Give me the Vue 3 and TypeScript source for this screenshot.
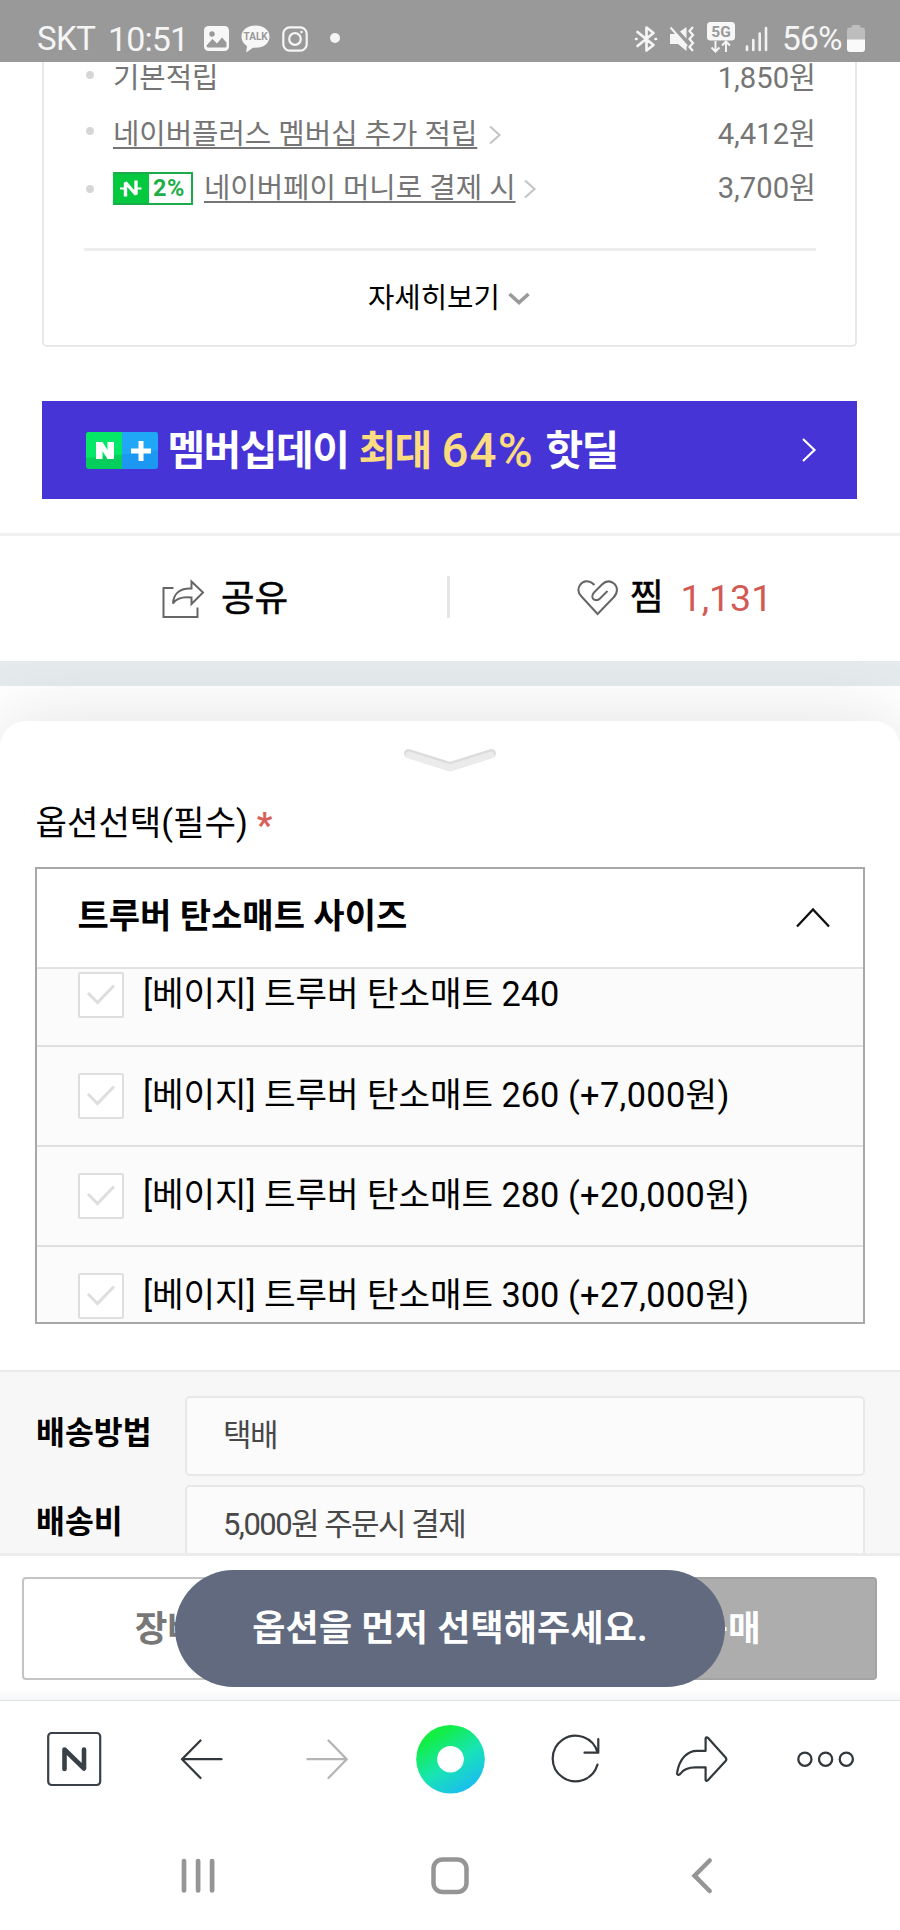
<script setup lang="ts">
interface Benefit {
  label: string
  amount: string
  link: boolean
  badge: boolean
}

interface Option {
  name: string
  extra: string
}

const benefits: Benefit[] = [
  { label: '기본적립', amount: '1,850원', link: false, badge: false },
  { label: '네이버플러스 멤버십 추가 적립', amount: '4,412원', link: true, badge: false },
  { label: '네이버페이 머니로 결제 시', amount: '3,700원', link: true, badge: true },
]

const options: Option[] = [
  { name: '[베이지] 트루버 탄소매트 240', extra: '' },
  { name: '[베이지] 트루버 탄소매트 260', extra: ' (+7,000원)' },
  { name: '[베이지] 트루버 탄소매트 280', extra: ' (+20,000원)' },
  { name: '[베이지] 트루버 탄소매트 300', extra: ' (+27,000원)' },
]

const delivery = [
  { label: '배송방법', value: '택배' },
  { label: '배송비', value: '5,000원 주문시 결제' },
]
</script>

<template>
  <div class="screen">
    <header class="status">
      <span class="carrier">SKT</span>
      <span class="clock">10:51</span>
      <svg class="s-photo" width="25" height="25" viewBox="0 0 25 25">
        <rect width="25" height="25" rx="4.500" fill="#f7f7f7" />
        <circle cx="8" cy="8" r="2.700" fill="#999" />
        <path d="M2.500 19.500 8.500 13l4.500 4.500 5-6 4.500 5v3.500q0 1.500-1.500 1.500H4q-1.500 0-1.500-2z" fill="#999" />
      </svg>
      <svg class="s-talk" width="29" height="28" viewBox="0 0 29 28">
        <path d="M14.500 0.500C6.500 0.500.5 5 .5 11.500c0 4.500 2.500 7.500 5.500 9.500l-.8 6.500 6.800-4.800c10 1 16.500-4 16.500-11.200C28.500 5 22.500.5 14.500.5z" fill="#f7f7f7" />
        <text x="14.600" y="15.400" text-anchor="middle" class="talk-text">TALK</text>
      </svg>
      <svg class="s-insta" width="26" height="26" viewBox="0 0 26 26" fill="none" stroke="#f5f5f5" stroke-width="2.200">
        <rect x="1.300" y="1.300" width="23.400" height="23.400" rx="6.500" />
        <circle cx="13" cy="13" r="5.800" />
        <circle cx="19.500" cy="6" r="1.300" fill="#f5f5f5" stroke="none" />
      </svg>
      <span class="s-dot"></span>
      <span class="spacer"></span>
      <svg class="s-bt" width="24" height="28" viewBox="0 0 24 28" fill="none" stroke="#f5f5f5" stroke-width="2.700" stroke-linejoin="round" stroke-linecap="round">
        <path d="M3.500 7 19.500 20 12.500 25.500V2.500L19.500 8 3.500 21M2 14h.5M21.500 14h.5" />
      </svg>
      <svg class="s-mute" width="26" height="26" viewBox="0 0 26 26">
        <path d="M1 8h5l2 .5 9.500 10V25L9 18H1zM11 5.500 17.500 1v11.500z" fill="#f5f5f5" />
        <path d="M1.500 1.500 18 20" stroke="#f5f5f5" stroke-width="2" />
        <path d="m24 1-3.500 4 3.500 4-3.500 4 3.500 4-3.500 4 3.500 4" fill="none" stroke="#f5f5f5" stroke-width="2.200" />
      </svg>
      <svg class="s-5g" width="28" height="32" viewBox="0 0 28 32">
        <rect width="28" height="18.500" rx="3.500" fill="#f7f7f7" />
        <text x="14" y="15" text-anchor="middle" class="g-text">5G</text>
        <path d="M8.500 19v10M4.500 25.500l4 4 4-4M19 30V20M15 23.500l4-4 4 4" fill="none" stroke="#f5f5f5" stroke-width="2" />
      </svg>
      <svg class="s-signal" width="24" height="26" viewBox="0 0 24 26" stroke="#f2f2f2" stroke-width="2.600" stroke-linecap="round">
        <path d="M2 20.500v3.500M8.300 14v10M14.700 7.500V24M21 2v22" />
      </svg>
      <span class="percent">56%</span>
      <svg class="s-batt" width="18" height="27" viewBox="0 0 18 27">
        <path d="M6 0h6q1.500 0 1.500 2.500h1.500q3 0 3 3V15H0V5.500q0-3 3-3h1.500Q4.500 0 6 0z" fill="#bdbdbd" />
        <path d="M0 14.500h18V24q0 3-3 3H3q-3 0-3-3z" fill="#fafafa" />
      </svg>
    </header>

    <section class="card">
      <ul class="benefits">
        <li v-for="b in benefits" :key="b.label" class="benefit">
          <span class="bullet"></span>
          <span v-if="b.badge" class="npay">
            <svg width="34" height="29" viewBox="0 0 34 29" fill="none" stroke="#fff">
              <path d="M10.500 22.500V8.500L21 20.500V6.500" stroke-width="3.400" stroke-linejoin="bevel" />
              <path d="M5 14.500h6M20.500 14.500h6" stroke-width="2.200" />
            </svg>
            <b>2%</b>
          </span>
          <span :class="{ link: b.link }">{{ b.label }}</span>
          <svg v-if="b.link" class="arrow" width="14" height="20" viewBox="0 0 14 20">
            <path d="M2 1.500 11.500 10 2 18.500" fill="none" stroke="#c6c6c6" stroke-width="2.200" />
          </svg>
          <span class="amount">{{ b.amount }}</span>
        </li>
      </ul>
      <div class="more">
        <span>자세히보기</span>
        <svg width="22" height="14" viewBox="0 0 22 14">
          <path d="M1.500 2 11 10.500 20.500 2" fill="none" stroke="#9a9a9a" stroke-width="3.600" />
        </svg>
      </div>
    </section>

    <section class="banner">
      <svg class="nplus" width="72" height="37" viewBox="0 0 72 37">
        <defs>
          <clipPath id="nplus-clip"><rect width="72" height="37" rx="3" /></clipPath>
        </defs>
        <g clip-path="url(#nplus-clip)">
          <rect width="36" height="37" fill="#06ce5c" />
          <path d="M0 0h36v22.500L0 26z" fill="#05e766" />
          <rect x="36" width="36" height="37" fill="#1c98f3" />
          <path d="M36 0h36v18L36 22.500z" fill="#20a8f6" />
        </g>
        <path d="M10 10h6.500l5 8V10h6.500v17h-6.500l-5-8v8H10z" fill="#fff" />
        <path d="M55 9v20M45 19h20" stroke="#fff" stroke-width="5" />
      </svg>
      <span class="banner-text"><span class="w1">멤버십데이</span><span class="w2">최대</span><span class="w3">64%</span><span class="w4">핫딜</span></span>
      <svg class="banner-arrow" width="16" height="24" viewBox="0 0 16 24">
        <path d="M2 1 13.500 12 2 23" fill="none" stroke="#fff" stroke-width="2.200" />
      </svg>
    </section>

    <section class="social">
      <div class="share">
        <svg width="44" height="40" viewBox="161 578 44 40" fill="none" stroke="#666" stroke-width="2">
          <path d="M173.500 587H163.500V616H197.500V606.500" />
          <path d="M191.500 580.500 203 591.500 191.500 603V596.500C182 595.500 176 597.500 173 602.500 173.500 591.500 181 587 191.500 587.500z" />
        </svg>
        <span>공유</span>
      </div>
      <i class="split"></i>
      <div class="zzim">
        <svg width="42" height="38" viewBox="577 580 42 38" fill="none" stroke="#666" stroke-width="2">
          <path d="M594.500 586C589 580.500 583 581.500 580 586 577.500 590 578.500 594.500 581.500 597.500L597.600 615 613.500 598.500C618 594 618 588 614 584.500 610 581.500 605.500 582 602 585.500L594 593.500C591.500 596.500 592 599.500 594 600.500 596 601.500 598.500 601 600 599.500L607.500 592" />
        </svg>
        <span class="zlabel">찜</span>
        <span class="zcount">1,131</span>
      </div>
    </section>
    <div class="band"></div>

    <section class="sheet">
      <svg class="handle" width="96" height="28" viewBox="402 746 96 28" fill="none" stroke-linecap="round" stroke-linejoin="round">
        <path d="M408.500 753.500 450 766.500 491.500 753.500" stroke="#dcdcdc" stroke-width="9" />
        <path d="M409 755 450 768 491 755" stroke="#ebebeb" stroke-width="7" />
      </svg>
      <h2 class="title">옵션선택(필수)<em>*</em></h2>
      <div class="select">
        <div class="select-head">
          <span>트루버 탄소매트 사이즈</span>
          <svg width="36" height="22" viewBox="0 0 36 22">
            <path d="M2 19.500 18 2.500 34 19.500" fill="none" stroke="#111" stroke-width="2.300" />
          </svg>
        </div>
        <div class="options">
          <div v-for="o in options" :key="o.name" class="option">
            <span class="check">
              <svg width="30" height="24" viewBox="0 0 30 24">
                <path d="M2 11 11.500 20.500 28 3.500" fill="none" stroke="#dedede" stroke-width="3" />
              </svg>
            </span>
            <span class="option-text">{{ o.name }}<span class="extra">{{ o.extra }}</span></span>
          </div>
        </div>
      </div>

      <div class="delivery">
        <div v-for="d in delivery" :key="d.label" class="d-row">
          <b>{{ d.label }}</b>
          <span class="field">{{ d.value }}</span>
        </div>
      </div>

      <div class="actions">
        <div class="cart">장바구니</div>
        <div class="buy">구매</div>
        <div class="toast">옵션을 먼저 선택해주세요.</div>
      </div>
    </section>

    <nav class="toolbar">
      <svg width="70" height="70" viewBox="39 1724 70 70" fill="none" stroke="#394047">
        <rect x="48.200" y="1733" width="52" height="52" rx="3.500" stroke-width="2.200" />
        <path d="M64.500 1769V1749.500L84 1768.500V1749.500" stroke-width="4.600" stroke-linecap="round" stroke-linejoin="round" />
      </svg>
      <svg width="70" height="70" viewBox="165 1724 70 70" fill="none" stroke="#33383d" stroke-width="2.300" stroke-linecap="round" stroke-linejoin="round">
        <path d="M221.500 1759.200H182M200.500 1740.500 182 1759.200 200.500 1778" />
      </svg>
      <svg width="70" height="70" viewBox="290 1724 70 70" fill="none" stroke="#b4b4b4" stroke-width="2.300" stroke-linecap="round" stroke-linejoin="round">
        <path d="M307.500 1759.200H346.500M328.500 1740.500 346.700 1759.200 328.500 1778" />
      </svg>
      <svg width="70" height="70" viewBox="415.200 1724 70 70">
        <defs>
          <linearGradient id="dot-grad" x1="0.200" y1="0.100" x2="0.750" y2="0.950">
            <stop offset="0.080" stop-color="#12ee44" />
            <stop offset="0.550" stop-color="#18e4b4" />
            <stop offset="1" stop-color="#1bbdf0" />
          </linearGradient>
        </defs>
        <circle cx="450.700" cy="1759.200" r="34.300" fill="url(#dot-grad)" />
        <circle cx="450.700" cy="1759.200" r="13.300" fill="#fff" />
      </svg>
      <svg width="70" height="70" viewBox="541 1724 70 70" fill="none" stroke="#33383d" stroke-width="2.200" stroke-linecap="round" stroke-linejoin="round">
        <path d="M597.500 1764.500A22.800 22.800 0 1 1 597.500 1752.500M598.300 1739V1752.700H584.500" />
      </svg>
      <svg width="70" height="70" viewBox="666.400 1724 70 70" fill="none" stroke="#33383d" stroke-width="2.200" stroke-linejoin="round">
        <path d="M706 1738.500Q706.500 1736.500 708.500 1738L726 1757.500Q727.500 1759.200 726 1761L708.500 1780Q706.500 1782 706 1780V1767.300H696C689 1767.300 684 1769 681 1773.500 679 1776 677 1774.500 677.500 1772.500 680 1758.500 688 1750.500 698 1750.800H706z" />
      </svg>
      <svg width="70" height="70" viewBox="792.300 1724 70 70" fill="none" stroke="#33383d" stroke-width="2.300">
        <circle cx="805.200" cy="1759.200" r="6.600" /><circle cx="825.900" cy="1759.200" r="6.600" /><circle cx="846.600" cy="1759.200" r="6.600" />
      </svg>
    </nav>

    <footer class="sysnav">
      <svg width="40" height="40" viewBox="178.300 1856 40 40" stroke="#959595" stroke-width="4.700" stroke-linecap="round">
        <path d="M184.300 1861V1890.500M198.400 1861V1890.500M212.400 1861V1890.500" />
      </svg>
      <svg width="40" height="40" viewBox="430.300 1856 40 40" fill="none" stroke="#959595" stroke-width="4.500">
        <rect x="433.800" y="1859.500" width="33" height="32.500" rx="9" />
      </svg>
      <svg width="40" height="40" viewBox="682.300 1856 40 40" fill="none" stroke="#959595" stroke-width="4.500" stroke-linecap="round">
        <path d="M710 1860.500 694.800 1875.700 710 1891" />
      </svg>
    </footer>
  </div>
</template>

<style>
body {
  margin: 0;
  background: #fff;
}
</style>

<style scoped>
.screen {
  width: 900px;
  height: 1930px;
  overflow: hidden;
  display: flex;
  flex-direction: column;
  background: #fff;
  font-family: Roboto, 'Noto Sans CJK KR', sans-serif;
  color: #000;
}
.screen * {
  box-sizing: border-box;
}
.screen > * {
  flex-shrink: 0;
}
svg {
  display: block;
  flex-shrink: 0;
}
span {
  white-space: nowrap;
}

/* status bar */
.status {
  height: 62px;
  background: #999;
  display: flex;
  align-items: flex-start;
  padding: 0 35px 0 37px;
  color: #f5f5f5;
  font-size: 33px;
  line-height: 40px;
}
.carrier {
  width: 71px;
  padding-top: 19px;
  letter-spacing: -0.5px;
}
.clock {
  width: 96px;
  padding-top: 19px;
  font-size: 34px;
  letter-spacing: -0.9px;
}
.s-photo { margin-top: 26px; }
.s-talk { margin: 25px 0 0 12px; }
.s-insta { margin: 26px 0 0 12px; }
.s-dot {
  width: 10px;
  height: 10px;
  border-radius: 50%;
  background: #f5f5f5;
  margin: 33px 0 0 22px;
}
.spacer { flex: 1; }
.s-bt { margin: 25px 11px 0 0; }
.s-mute { margin: 26px 12px 0 0; }
.s-5g { margin: 22px 10px 0 0; }
.s-signal { margin: 26px 13px 0 0; }
.percent {
  width: 65px;
  padding-top: 19px;
  font-size: 33.5px;
  letter-spacing: -0.8px;
}
.s-batt { margin-top: 25px; }
.talk-text {
  font: 700 10px Roboto, sans-serif;
  fill: #999;
}
.g-text {
  font: 700 15.5px Roboto, sans-serif;
  fill: #999;
}

/* benefits card */
.card {
  width: 815px;
  height: 285px;
  margin-left: 42.4px;
  border: 2px solid #e8e8e8;
  border-top: 0;
  border-radius: 0 0 5px 5px;
  padding: 0 39.5px;
  font-size: 28.7px;
  line-height: 33px;
}
.benefits {
  list-style: none;
  margin: 0;
  padding: 0 0 43px;
  border-bottom: 3px solid #ededed;
  display: flex;
  flex-direction: column;
  color: #757575;
}
.benefit {
  display: flex;
  align-items: center;
  height: 33px;
}
.benefit:nth-child(2) { margin-top: 23px; }
.benefit:nth-child(3) { margin-top: 21px; }
.bullet {
  width: 8px;
  height: 8px;
  border-radius: 50%;
  background: #d6d6d6;
  margin: -7px 19px 0 2px;
}
.benefit:nth-child(3) .bullet { margin-top: 1px; }
.link {
  text-decoration: underline;
  text-decoration-thickness: 2px;
  text-underline-offset: 3px;
}
.arrow { margin-left: 11px; }
.benefit:nth-child(3) .arrow { margin-left: 7px; }
.amount {
  margin-left: auto;
  font-size: 29.2px;
}
.npay {
  width: 80px;
  height: 33px;
  border: 2px solid #1aab4a;
  border-left-color: #04c83d;
  margin-right: 11px;
  display: flex;
  align-items: center;
  color: #1fae48;
}
.npay svg { background: #04c83d; }
.npay b {
  font-size: 23.5px;
  margin-left: 4px;
  letter-spacing: 0.6px;
}
.more {
  display: flex;
  align-items: center;
  justify-content: center;
  padding: 31px 2px 0 0;
}
.more svg { margin: 0 0 0 8px; }

/* membership banner */
.banner {
  width: 815px;
  height: 98px;
  margin: 54px 0 0 42.4px;
  background: #4734d6;
  display: flex;
  align-items: center;
  padding: 0 40px 0 44px;
}
.banner-text {
  display: flex;
  font-size: 41px;
  line-height: 50px;
  font-weight: 700;
  letter-spacing: -1.5px;
  color: #fff;
  margin-left: 9px;
  padding-top: 1px;
}
.w1 { width: 191px; }
.w2 { width: 83px; color: #fbdc80; }
.w3 {
  width: 104px;
  color: #fbdc80;
  font-size: 47.5px;
  font-weight: 500;
  letter-spacing: 1.2px;
}
.banner-arrow { margin-left: auto; }

/* share / like */
.social {
  height: 128px;
  margin-top: 34px;
  border-top: 3px solid #f0f0f0;
  display: flex;
  align-items: flex-start;
  font-size: 36.5px;
  line-height: 44px;
}
.share {
  display: flex;
  align-items: center;
  padding: 40px 0 0 161px;
  width: 447px;
}
.share span,
.zlabel {
  padding-top: 1px;
  -webkit-text-stroke: 0.5px #000;
}
.share span { margin-left: 16px; }
.split {
  width: 3px;
  height: 42px;
  background: #e6e6e6;
  margin-top: 40px;
}
.zzim {
  display: flex;
  align-items: center;
  padding: 39px 0 0 127px;
}
.zlabel { margin-left: 11px; }
.zcount {
  margin-left: 17px;
  font-size: 37.5px;
  color: #d25a55;
}
.band {
  height: 25px;
  background: #e5eaed;
}

/* option sheet */
.sheet {
  position: relative;
  height: 979px;
  margin-top: 35px;
  background: #fff;
  border-radius: 26px 26px 0 0;
  box-shadow: 0 0 75px rgba(0, 0, 0, 0.12);
  display: flex;
  flex-direction: column;
}
.handle { margin: 25px 0 0 402px; }
.title {
  margin: 27px 0 0 35.5px;
  font-size: 34.2px;
  line-height: 44px;
  font-weight: 400;
  display: flex;
}
.title em {
  font-style: normal;
  font-weight: 700;
  color: #d9605a;
  margin: 2px 0 0 9px;
  height: 42px;
}
.select {
  width: 830px;
  height: 457px;
  margin: 21.5px 0 0 35px;
  border: 2px solid #a8a8a8;
  overflow: hidden;
  display: flex;
  flex-direction: column;
  font-size: 34.3px;
  line-height: 44px;
}
.select-head {
  height: 100px;
  flex-shrink: 0;
  border-bottom: 2px solid #e2e2e2;
  display: flex;
  align-items: center;
  justify-content: space-between;
  padding: 0 32px 3px 40.5px;
  font-weight: 700;
}
.select-head span { font-size: 34px; }
.select-head svg { margin-top: 3px; }
.options {
  flex: 1;
  min-height: 0;
  background: #fbfbfb;
  display: flex;
  flex-direction: column;
  justify-content: flex-end;
  margin-bottom: -26px;
}
.option {
  height: 100.3px;
  flex-shrink: 0;
  border-bottom: 2px solid #e0e0e0;
  display: flex;
  align-items: center;
  padding-left: 41px;
}
.option-text {
  margin: -2px 0 0 19px;
  letter-spacing: -0.05px;
}
.extra {
  white-space: pre;
  letter-spacing: 0.35px;
}
.check {
  width: 46px;
  height: 46px;
  border: 2px solid #dedede;
  border-radius: 2px;
  background: #fff;
  display: flex;
  align-items: center;
  justify-content: center;
}
.check svg { margin-top: -2px; }

/* delivery */
.delivery {
  height: 186px;
  margin-top: 46.5px;
  flex-shrink: 0;
  overflow: hidden;
  background: #f7f7f7;
  border-top: 2px solid #ebebeb;
  border-bottom: 3px solid #ececec;
  padding: 24px 35px 0;
  display: flex;
  flex-direction: column;
  gap: 9px;
}
.d-row {
  display: flex;
  flex-shrink: 0;
  height: 80px;
}
.d-row b {
  width: 150px;
  padding-left: 1px;
  font-size: 31.4px;
  line-height: 75px;
}
.field {
  flex: 1;
  border: 2px solid #e8e8e8;
  border-radius: 5px;
  background: #fbfbfb;
  padding-left: 36px;
  font-size: 31px;
  line-height: 76px;
  letter-spacing: -1.55px;
  color: #484848;
}

/* purchase buttons */
.actions {
  position: relative;
  flex: 1;
  display: flex;
  padding: 21px 23px 0 22px;
  font-size: 35.5px;
  line-height: 101px;
  font-weight: 700;
  text-align: center;
  background: linear-gradient(#fff 132px, #f5f6f8 145px);
}
.cart {
  width: 356px;
  height: 103px;
  background: #fff;
  border: 2px solid #c4c4c4;
  border-radius: 4px;
  color: #777;
}
.buy {
  width: 298px;
  height: 103px;
  margin-left: auto;
  background: #adadad;
  border: 2px solid #a3a3a3;
  border-radius: 4px;
  color: #fff;
}
.toast {
  position: absolute;
  left: 175px;
  top: 14px;
  width: 550px;
  height: 117px;
  border-radius: 59px;
  background: #626a7f;
  color: #fff;
  font-size: 36px;
  line-height: 119px;
  letter-spacing: 0.2px;
}

/* browser toolbar */
.toolbar {
  position: relative;
  height: 119px;
  border-top: 1px solid #dfe2e5;
  background: #fff;
  display: grid;
  grid-template-columns: repeat(7, 125.4px);
  justify-content: center;
  justify-items: center;
  padding: 23px 0 0 1px;
}
.sysnav {
  position: relative;
  flex: 1;
  background: #fff;
  display: flex;
  justify-content: space-between;
  padding: 37px 178px 0;
}
</style>
